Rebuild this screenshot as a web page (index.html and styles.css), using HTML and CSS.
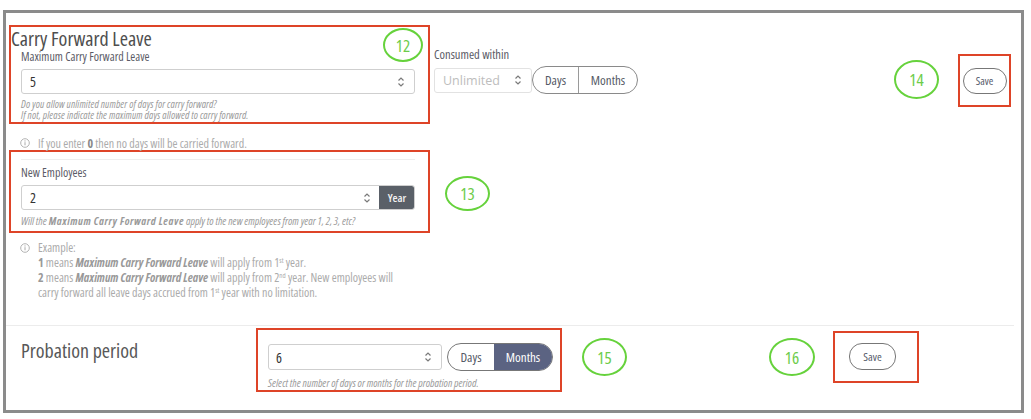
FILE: index.html
```html
<!DOCTYPE html>
<html>
<head>
<meta charset="utf-8">
<link rel="stylesheet" href="styles.css">
</head>
<body>
<div class="frame">
  <div class="top">
    <div class="col-left">
      <div class="mark mark-12">
        <div class="title">Carry Forward Leave</div>
        <div class="field">
          <div class="label">Maximum Carry Forward Leave</div>
          <div class="input wide">
            <span class="val">5</span>
            <svg class="spin" viewBox="0 0 8 12" width="8" height="12"><path d="M1.5 4.5 L4 2 L6.5 4.5 M1.5 7.5 L4 10 L6.5 7.5" fill="none" stroke="#7a7a7a" stroke-width="1.2"/></svg>
          </div>
          <p class="help two-line">Do you allow unlimited number of days for carry forward?<br>If not, please indicate the maximum days allowed to carry forward.</p>
        </div>
      </div>
      <div class="info">
        <svg class="i-icon" viewBox="0 0 10 10" width="10" height="10"><circle cx="5" cy="5" r="4.3" fill="none" stroke="#aaa" stroke-width="0.9"/><path d="M5 4.2 V7.3" stroke="#aaa" stroke-width="1"/><circle cx="5" cy="2.9" r="0.6" fill="#aaa"/></svg>
        <span>If you enter <b>0</b> then no days will be carried forward.</span>
      </div>
      <div class="mark mark-13">
        <div class="divider"></div>
        <div class="field">
          <div class="label">New Employees</div>
          <div class="input wide addon-input">
            <span class="val">2</span>
            <svg class="spin" viewBox="0 0 8 12" width="8" height="12"><path d="M1.5 4.5 L4 2 L6.5 4.5 M1.5 7.5 L4 10 L6.5 7.5" fill="none" stroke="#7a7a7a" stroke-width="1.2"/></svg>
            <span class="addon">Year</span>
          </div>
          <div class="help">Will the <b class="spaced">Maximum Carry Forward Leave</b> apply to the new employees from year 1, 2, 3, etc?</div>
        </div>
      </div>
      <div class="example">
        <svg class="i-icon" viewBox="0 0 10 10" width="10" height="10"><circle cx="5" cy="5" r="4.3" fill="none" stroke="#aaa" stroke-width="0.9"/><path d="M5 4.2 V7.3" stroke="#aaa" stroke-width="1"/><circle cx="5" cy="2.9" r="0.6" fill="#aaa"/></svg>
        <div class="ex-text">
          <div>Example:</div>
          <div><b>1</b> means <b><i>Maximum Carry Forward Leave</i></b> will apply from 1<sup>st</sup> year.</div>
          <div><b>2</b> means <b><i>Maximum Carry Forward Leave</i></b> will apply from 2<sup>nd</sup> year. New employees will</div>
          <div>carry forward all leave days accrued from 1<sup>st</sup> year with no limitation.</div>
        </div>
      </div>
    </div>
    <div class="col-mid">
      <div class="label">Consumed within</div>
      <div class="row">
        <div class="input small">
          <span class="placeholder">Unlimited</span>
          <svg class="spin" viewBox="0 0 8 12" width="8" height="12"><path d="M1.5 4.5 L4 2 L6.5 4.5 M1.5 7.5 L4 10 L6.5 7.5" fill="none" stroke="#7a7a7a" stroke-width="1.2"/></svg>
        </div>
        <div class="pill">
          <span class="opt">Days</span>
          <span class="opt">Months</span>
        </div>
      </div>
    </div>
    <div class="mark mark-14">
      <button class="save">Save</button>
    </div>
  </div>
  <div class="bottom">
    <div class="prob-title">Probation period</div>
    <div class="mark mark-15">
      <div class="row">
        <div class="input prob">
          <span class="val">6</span>
          <svg class="spin" viewBox="0 0 8 12" width="8" height="12"><path d="M1.5 4.5 L4 2 L6.5 4.5 M1.5 7.5 L4 10 L6.5 7.5" fill="none" stroke="#7a7a7a" stroke-width="1.2"/></svg>
        </div>
        <div class="pill prob-pill">
          <span class="opt">Days</span>
          <span class="opt active">Months</span>
        </div>
      </div>
      <div class="help">Select the number of days or months for the probation period.</div>
    </div>
    <div class="mark mark-16">
      <button class="save save-lg">Save</button>
    </div>
  </div>
  <span class="circle c12">12</span>
  <span class="circle c13">13</span>
  <span class="circle c14">14</span>
  <span class="circle c15">15</span>
  <span class="circle c16">16</span>
</div>
</body>
</html>
```

FILE: styles.css
```css
* { box-sizing: border-box; }
html, body { margin: 0; padding: 0; background: #fff; }
body {
  font-family: "Open Sans", "Noto Sans", sans-serif;
  font-stretch: 87.5%;
  color: #555;
}
.frame {
  position: relative;
  margin: 10px 0 0 3px;
  width: 1021px;
  height: 403px;
  border: 3px solid #8b8b8b;
  background: #fff;
  display: flex;
  flex-direction: column;
}
.top {
  display: flex;
  height: 312px;
}
.col-left {
  margin-left: 3px;
  padding-top: 12px;
  width: 421px;
  flex: 0 0 421px;
}
.mark {
  border: 2px solid #de4428;
}
.mark-12 {
  height: 99px;
  padding: 2px 0 0 0;
}
.title {
  font-size: 20px;
  line-height: 19px;
  color: #4e4e4e;
}
.field {
  padding-left: 10px;
  width: 404px;
}
.label {
  font-size: 12px;
  line-height: 14px;
  font-weight: 500;
  color: #5b5b66;
}
.mark-12 .label { margin-top: 2px; }
.input {
  display: flex;
  align-items: center;
  height: 25px;
  border: 1px solid #cfcfcf;
  border-radius: 3px;
  background: #fff;
}
.input.wide {
  width: 394px;
  margin-top: 5px;
  padding-left: 8px;
  padding-right: 9px;
}
.val {
  flex: 1;
  font-size: 14px;
  color: #333;
  font-weight: 500;
}
.spin { flex: 0 0 auto; }
.help {
  margin: 0;
  font-size: 10.4px;
  line-height: 11px;
  letter-spacing: 0.12px;
  font-style: italic;
  color: #9a9a9a;
  white-space: nowrap;
}
.field .input + .help { margin-top: 5px; }
.info {
  margin-top: 12px;
  height: 14px;
  display: flex;
  align-items: center;
  padding-left: 11px;
  font-size: 12px;
  color: #ababab;
  white-space: nowrap;
}
.info b { color: #888; }
.i-icon { margin-right: 8px; flex: 0 0 auto; }
.mark-13 {
  height: 83px;
  padding-top: 7px;
}
.divider {
  margin-left: 10px;
  width: 394px;
  height: 1px;
  background: #eeeeee;
}
.mark-13 .label { margin-top: 6px; }
.addon-input { padding-right: 0 !important; overflow: hidden; }
.addon-input .spin { margin-right: 8px; }
.addon {
  align-self: stretch;
  width: 36px;
  margin-right: -1px;
  background: #5a6068;
  color: #f2f2f2;
  font-size: 11.5px;
  font-weight: 600;
  display: flex;
  align-items: center;
  justify-content: center;
  border-radius: 0 3px 3px 0;
}
.mark-13 .help { margin-top: 4px; font-size: 10.8px; letter-spacing: 0; }
.help .spaced { letter-spacing: 0.6px; }
.example {
  margin-top: 7px;
  padding-left: 11px;
  display: flex;
  align-items: flex-start;
  font-size: 12px;
  line-height: 15px;
  color: #ababab;
  white-space: nowrap;
}
.example .i-icon { margin-top: 3px; }
.ex-text b { color: #999; }
.ex-text sup { font-size: 7px; line-height: 0; vertical-align: 4px; }
.col-mid {
  margin-left: 4px;
  padding-top: 35px;
}
.col-mid .label { font-size: 12.5px; }
.row {
  display: flex;
  align-items: center;
}
.col-mid .row { margin-top: 4px; }
.input.small {
  width: 98px;
  padding-left: 8px;
  padding-right: 9px;
  border-color: #e2e2e2;
}
.placeholder {
  flex: 1;
  font-size: 12.5px;
  font-stretch: 100%;
  color: #bdbdbd;
  font-weight: 500;
}
.pill {
  display: flex;
  height: 28px;
  width: 106px;
  border: 1px solid #8a8a8a;
  border-radius: 14px;
  overflow: hidden;
}
.opt {
  display: flex;
  align-items: center;
  justify-content: center;
  font-size: 13px;
  font-weight: 500;
  color: #555a66;
}
.opt:first-child { width: 46px; border-right: 1px solid #9a9a9a; }
.opt:last-child { flex: 1; }
.mark-14 {
  margin-left: auto;
  margin-right: 10px;
  margin-top: 41px;
  width: 53px;
  height: 53px;
  display: flex;
  align-items: center;
  justify-content: center;
}
.save {
  font-family: inherit;
  font-stretch: 87.5%;
  font-size: 11px;
  color: #555a6a;
  background: #fff;
  border: 1px solid #777;
  border-radius: 13px;
  width: 44px;
  height: 26px;
  padding: 0;
}
.bottom {
  display: flex;
  align-items: flex-start;
  border-top: 1px solid #ececec;
  margin-right: 7px;
  flex: 1;
}
.prob-title {
  flex: 0 0 235px;
  margin-left: 15px;
  margin-top: 14px;
  font-size: 20px;
  line-height: 22px;
  color: #585858;
}
.mark-15 {
  margin-top: 2px;
  width: 306px;
  height: 64px;
  padding: 13px 0 0 10px;
}
.input.prob {
  width: 174px;
  height: 26px;
  padding-left: 7px;
  padding-right: 9px;
}
.prob-pill { margin-left: 5px; border-color: #777; }
.opt.active { background: #5b6382; color: #fff; }
.prob-pill .opt:first-child { border-right: none; }
.mark-15 .help { margin-top: 6px; font-size: 10.8px; letter-spacing: 0; }
.mark-16 {
  margin-left: 271px;
  margin-top: 5px;
  width: 86px;
  height: 52px;
  padding: 10px 0 0 14px;
}
.save-lg { width: 47px; height: 27px; font-size: 11.5px; }
.circle {
  position: absolute;
  border: 2.5px solid #66d23c;
  border-radius: 50%;
  color: #6dcc4a;
  font-size: 17px;
  display: flex;
  align-items: center;
  justify-content: center;
}
.c12 { left: 377px; top: 15px; width: 40px; height: 34px; }
.c13 { left: 439px; top: 163px; width: 45px; height: 35px; }
.c14 { left: 888px; top: 47px; width: 45px; height: 39px; }
.c15 { left: 576px; top: 325px; width: 45px; height: 38px; }
.c16 { left: 763px; top: 325px; width: 46px; height: 38px; }
```
